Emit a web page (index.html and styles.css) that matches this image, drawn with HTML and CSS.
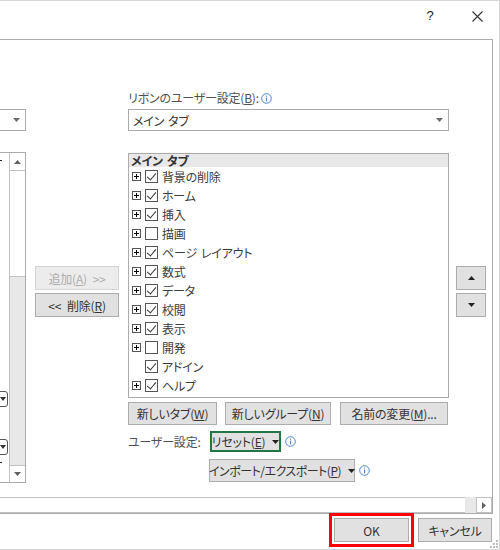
FILE: index.html
```html
<!DOCTYPE html>
<html lang="ja">
<head>
    <meta charset="UTF-8">
    <title>リボンのユーザー設定</title>
    <link rel="stylesheet" href="styles.css">
</head>
<body>

<div class="dialog">
    <div class="title-bar">
        <span class="title-help">?</span>
        <span class="title-close">
            <svg width="11" height="11" viewBox="0 0 11 11"><path d="M0.5 0.5 L10.5 10.5 M10.5 0.5 L0.5 10.5" stroke="#333" stroke-width="1.1" fill="none"/></svg>
        </span>
    </div>

    <div class="panel">
        <div class="panel-body">
            <!-- 左側 (コマンドの選択) -->
            <div class="left-col">
                <div class="combo combo-left">
                    <svg class="combo-arrow" width="7" height="4" viewBox="0 0 7 4"><polygon points="0,0 7,0 3.5,4" fill="#6d6d6d"/></svg>
                </div>
                <div class="left-list">
                    <div class="left-items">
                        <span class="cut-mark first"></span>
                        <span class="mini-combo first">
                            <svg width="6" height="4" viewBox="0 0 6 4"><polygon points="0,0 6,0 3,4" fill="#333"/></svg>
                        </span>
                        <span class="mini-combo">
                            <svg width="6" height="4" viewBox="0 0 6 4"><polygon points="0,0 6,0 3,4" fill="#333"/></svg>
                        </span>
                        <span class="cut-mark last"></span>
                    </div>
                    <div class="vscroll">
                        <div class="sb-btn">
                            <svg width="7" height="4" viewBox="0 0 7 4"><polygon points="0,4 7,4 3.5,0" fill="#606060"/></svg>
                        </div>
                        <div class="sb-thumb"></div>
                        <div class="sb-track"></div>
                        <div class="sb-btn down">
                            <svg width="7" height="4" viewBox="0 0 7 4"><polygon points="0,0 7,0 3.5,4" fill="#606060"/></svg>
                        </div>
                    </div>
                </div>
            </div>

            <!-- 追加 / 削除 -->
            <div class="mid-col">
                <button class="btn btn-move" disabled><span>追加(<u>A</u>)&ensp;&gt;&gt;</span></button>
                <button class="btn btn-move"><span>&lt;&lt;&ensp;削除(<u>R</u>)</span></button>
            </div>

            <!-- リボンのユーザー設定 -->
            <div class="right-col">
                <div class="field-label">
                    <span>リボンのユーザー設定(<u>B</u>):</span>
                    <svg class="info" width="11" height="11" viewBox="0 0 11 11"><circle cx="5.5" cy="5.5" r="4.8" fill="none" stroke="#4a86c8"/><rect x="5" y="2.6" width="1.1" height="1.1" fill="#4a86c8"/><rect x="5" y="4.6" width="1.1" height="3.8" fill="#4a86c8"/></svg>
                </div>
                <div class="combo combo-main">
                    <span>メイン<span class="sp"></span>タブ</span>
                    <svg class="combo-arrow" width="7" height="4" viewBox="0 0 7 4"><polygon points="0,0 7,0 3.5,4" fill="#6d6d6d"/></svg>
                </div>

                <div class="tab-list">
                    <div class="tab-head">メイン<span class="sp"></span>タブ</div>
                    <div class="tab-row"><span class="expander"></span><span class="check on"></span><span class="tab-name">背景の削除</span></div>
                    <div class="tab-row"><span class="expander"></span><span class="check on"></span><span class="tab-name">ホーム</span></div>
                    <div class="tab-row"><span class="expander"></span><span class="check on"></span><span class="tab-name">挿入</span></div>
                    <div class="tab-row"><span class="expander"></span><span class="check"></span><span class="tab-name">描画</span></div>
                    <div class="tab-row"><span class="expander"></span><span class="check on"></span><span class="tab-name">ページ<span class="sp"></span>レイアウト</span></div>
                    <div class="tab-row"><span class="expander"></span><span class="check on"></span><span class="tab-name">数式</span></div>
                    <div class="tab-row"><span class="expander"></span><span class="check on"></span><span class="tab-name">データ</span></div>
                    <div class="tab-row"><span class="expander"></span><span class="check on"></span><span class="tab-name">校閲</span></div>
                    <div class="tab-row"><span class="expander"></span><span class="check on"></span><span class="tab-name">表示</span></div>
                    <div class="tab-row"><span class="expander"></span><span class="check"></span><span class="tab-name">開発</span></div>
                    <div class="tab-row"><span class="expander none"></span><span class="check on"></span><span class="tab-name">アドイン</span></div>
                    <div class="tab-row"><span class="expander"></span><span class="check on"></span><span class="tab-name">ヘルプ</span></div>
                </div>

                <div class="btn-row">
                    <button class="btn btn-new-tab"><span>新しいタブ(<u>W</u>)</span></button>
                    <button class="btn btn-new-group"><span>新しいグループ(<u>N</u>)</span></button>
                    <button class="btn btn-rename"><span>名前の変更(<u>M</u>)...</span></button>
                </div>

                <div class="custom-row">
                    <span class="custom-label">ユーザー設定:</span>
                    <button class="btn btn-drop btn-reset">
                        <span>リセット(<u>E</u>)</span>
                        <svg width="7" height="4" viewBox="0 0 7 4"><polygon points="0,0 7,0 3.5,4" fill="#222"/></svg>
                    </button>
                    <svg class="info" width="11" height="11" viewBox="0 0 11 11"><circle cx="5.5" cy="5.5" r="4.8" fill="none" stroke="#4a86c8"/><rect x="5" y="2.6" width="1.1" height="1.1" fill="#4a86c8"/><rect x="5" y="4.6" width="1.1" height="3.8" fill="#4a86c8"/></svg>
                </div>

                <div class="custom-row import-row">
                    <button class="btn btn-drop btn-import">
                        <span>インポート/エクスポート(<u>P</u>)</span>
                        <svg width="7" height="4" viewBox="0 0 7 4"><polygon points="0,0 7,0 3.5,4" fill="#222"/></svg>
                    </button>
                    <svg class="info" width="11" height="11" viewBox="0 0 11 11"><circle cx="5.5" cy="5.5" r="4.8" fill="none" stroke="#4a86c8"/><rect x="5" y="2.6" width="1.1" height="1.1" fill="#4a86c8"/><rect x="5" y="4.6" width="1.1" height="3.8" fill="#4a86c8"/></svg>
                </div>
            </div>

            <!-- 上へ / 下へ -->
            <div class="order-col">
                <button class="btn btn-order">
                    <svg width="7" height="4" viewBox="0 0 7 4"><polygon points="0,4 7,4 3.5,0" fill="#222"/></svg>
                </button>
                <button class="btn btn-order">
                    <svg width="7" height="4" viewBox="0 0 7 4"><polygon points="0,0 7,0 3.5,4" fill="#222"/></svg>
                </button>
            </div>
        </div>

        <div class="hscroll">
            <div class="hs-thumb"></div>
            <div class="hs-track"></div>
            <div class="hs-btn">
                <svg width="4" height="7" viewBox="0 0 4 7"><polygon points="0,0 4,3.5 0,7" fill="#606060"/></svg>
            </div>
        </div>
    </div>

    <div class="footer">
        <button class="btn btn-ok"><span>OK</span></button>
        <button class="btn btn-cancel"><span>キャンセル</span></button>
    </div>

    <svg class="grip" width="8" height="8" viewBox="0 0 8 8">
        <rect x="6" y="0" width="2" height="2" fill="#bcbcbc"/>
        <rect x="3" y="3" width="2" height="2" fill="#bcbcbc"/>
        <rect x="6" y="3" width="2" height="2" fill="#bcbcbc"/>
        <rect x="0" y="6" width="2" height="2" fill="#bcbcbc"/>
        <rect x="3" y="6" width="2" height="2" fill="#bcbcbc"/>
        <rect x="6" y="6" width="2" height="2" fill="#bcbcbc"/>
    </svg>
</div>

</body>
</html>
```

FILE: styles.css
```css
* {
    margin: 0;
    padding: 0;
    box-sizing: border-box;
}

body {
    font-family: "Noto Sans CJK JP", "Noto Sans", sans-serif;
    font-feature-settings: "palt";
    font-size: 12px;
    letter-spacing: -0.2px;
    color: #3c3c3c;
    background: #fff;
}

u {
    text-decoration: underline;
    text-underline-offset: 1px;
}

svg {
    flex-shrink: 0;
}

.sp {
    display: inline-block;
    width: 4px;
}

.dialog {
    position: relative;
    width: 500px;
    height: 550px;
    border-top: 1px solid #d6d6d6;
    border-right: 1px solid #d6d6d6;
    border-bottom: 1px solid #d6d6d6;
    overflow: hidden;
    display: flex;
    flex-direction: column;
}

/* タイトルバー */
.title-bar {
    height: 38px;
    flex-shrink: 0;
    display: flex;
    justify-content: flex-end;
    align-items: flex-start;
    padding: 6px 10px 0 0;
    gap: 25px;
}

.title-help {
    width: 20px;
    height: 18px;
    line-height: 18px;
    text-align: center;
    font-family: "Liberation Sans", sans-serif;
    font-size: 13px;
    color: #222;
}

.title-close {
    width: 24px;
    height: 18px;
    display: flex;
    align-items: center;
    justify-content: center;
}

/* パネル */
.panel {
    margin-left: -1px;
    width: 494px;
    height: 475px;
    flex-shrink: 0;
    border: 1px solid #ababab;
    overflow: hidden;
    display: flex;
    flex-direction: column;
}

.panel-body {
    height: 457px;
    display: grid;
    grid-template-columns: 26px 102px 321px 43px;
}

.btn {
    font-family: inherit;
    font-feature-settings: "palt";
    font-size: 12px;
    letter-spacing: -0.2px;
    color: #333;
    background: #e1e1e1;
    border: 1px solid #adadad;
    display: flex;
    align-items: center;
    justify-content: center;
    white-space: nowrap;
}

.btn:disabled {
    background: #ececec;
    border-color: #d5d5d5;
    color: #acacac;
}

.combo {
    height: 22px;
    border: 1px solid #ababab;
    background: #fff;
    display: flex;
    align-items: center;
    justify-content: space-between;
}

/* 左側 */
.left-col {
    display: flex;
    flex-direction: column;
}

.combo-left {
    width: 100px;
    margin: 69px 0 0 -74px;
    justify-content: flex-end;
    padding-right: 5px;
}

.left-list {
    width: 100px;
    height: 331px;
    margin: 21px 0 0 -74px;
    border: 1px solid #ababab;
    display: flex;
}

.left-items {
    flex: 1;
    display: flex;
    flex-direction: column;
    align-items: flex-end;
}

.cut-mark {
    width: 2px;
    height: 1px;
    background: #222;
    margin-right: 7px;
}

.cut-mark.first {
    margin-top: 7px;
}

.cut-mark.last {
    margin-top: 7px;
}

.mini-combo {
    width: 24px;
    height: 16px;
    margin-top: 32px;
    margin-right: 1px;
    border: 1px solid #555;
    border-radius: 3px;
    display: flex;
    align-items: center;
    justify-content: flex-end;
    padding-right: 1px;
}

.mini-combo.first {
    margin-top: 230px;
}

.vscroll {
    width: 16px;
    display: flex;
    flex-direction: column;
    border-left: 1px solid #c2c2c2;
}

.sb-btn {
    height: 18px;
    border-bottom: 1px solid #c2c2c2;
    display: flex;
    align-items: center;
    justify-content: center;
}

.sb-btn.down {
    height: 17px;
    border-bottom: none;
    border-top: 1px solid #c2c2c2;
}

.sb-thumb {
    height: 106px;
    border-bottom: 1px solid #c2c2c2;
    background: #fff;
}

.sb-track {
    flex: 1;
    background: #e8e8e8;
}

/* 追加 / 削除 */
.mid-col {
    display: flex;
    flex-direction: column;
    gap: 3px;
    padding: 226px 0 0 9px;
}

.btn-move {
    width: 84px;
    height: 24px;
}

/* リボンのユーザー設定 */
.right-col {
    display: flex;
    flex-direction: column;
    padding-top: 50px;
}

.field-label {
    height: 16px;
    line-height: 16px;
    color: #505050;
    display: flex;
    align-items: center;
    gap: 2px;
}

.combo-main {
    margin-top: 3px;
    padding: 0 5px 0 4px;
    color: #333;
}

.tab-list {
    margin-top: 22px;
    height: 245px;
    border: 1px solid #ababab;
}

.tab-head {
    height: 13px;
    line-height: 13px;
    padding-left: 2px;
    background: #e8e8e8;
    font-weight: bold;
    color: #333;
}

.tab-row {
    height: 19px;
    padding-left: 3px;
    display: flex;
    align-items: center;
}

.expander {
    position: relative;
    width: 9px;
    height: 9px;
    margin-right: 4px;
    border: 1px solid #555;
}

.expander::before {
    content: "";
    position: absolute;
    left: 1px;
    top: 3px;
    width: 5px;
    height: 1px;
    background: #000;
}

.expander::after {
    content: "";
    position: absolute;
    left: 3px;
    top: 1px;
    width: 1px;
    height: 5px;
    background: #000;
}

.expander.none {
    border-color: transparent;
}

.expander.none::before,
.expander.none::after {
    display: none;
}

.check {
    position: relative;
    width: 13px;
    height: 13px;
    margin-right: 4px;
    border: 1px solid #555;
    background: #fff;
}

.check.on::after {
    content: "";
    position: absolute;
    left: 3px;
    top: 0px;
    width: 4px;
    height: 8px;
    border-right: 1px solid #333;
    border-bottom: 1px solid #333;
    transform: rotate(40deg);
}

.tab-name {
    line-height: 19px;
}

.btn-row {
    margin-top: 4px;
    display: flex;
}

.btn-row .btn {
    height: 23px;
}

.btn-new-tab {
    width: 89px;
}

.btn-new-group {
    width: 106px;
    margin-left: 8px;
}

.btn-rename {
    width: 108px;
    margin-left: 9px;
}

.custom-row {
    margin-top: 6px;
    display: flex;
    align-items: center;
}

.custom-label {
    width: 82px;
    color: #505050;
}

.btn-drop {
    gap: 7px;
}

.btn-reset {
    width: 71px;
    height: 21px;
    border: 2px solid #227547;
}

.import-row {
    margin-top: 7px;
    padding-left: 81px;
}

.btn-import {
    width: 146px;
    height: 23px;
    letter-spacing: -0.5px;
}

.info {
    margin-left: 4px;
}

.field-label .info {
    margin-left: 0;
}

/* 上へ / 下へ */
.order-col {
    display: flex;
    flex-direction: column;
    gap: 3px;
    padding: 226px 0 0 7px;
}

.btn-order {
    width: 30px;
    height: 24px;
}

/* 横スクロールバー */
.hscroll {
    height: 16px;
    display: flex;
}

.hs-thumb {
    flex: 1;
    border-top: 1px solid #c2c2c2;
    border-bottom: 1px solid #c2c2c2;
}

.hs-track {
    width: 11px;
    background: #e8e8e8;
}

.hs-btn {
    width: 16px;
    border: 1px solid #c2c2c2;
    display: flex;
    align-items: center;
    justify-content: center;
}

/* OK / キャンセル */
.footer {
    display: flex;
    justify-content: flex-end;
    gap: 9px;
    padding: 4px 7px 0 0;
}

.btn-ok {
    width: 75px;
    height: 24px;
    outline: 3px solid #ff0000;
    outline-offset: 2px;
}

.btn-cancel {
    width: 74px;
    height: 24px;
}

.grip {
    position: absolute;
    right: 1px;
    bottom: 1px;
}
```
